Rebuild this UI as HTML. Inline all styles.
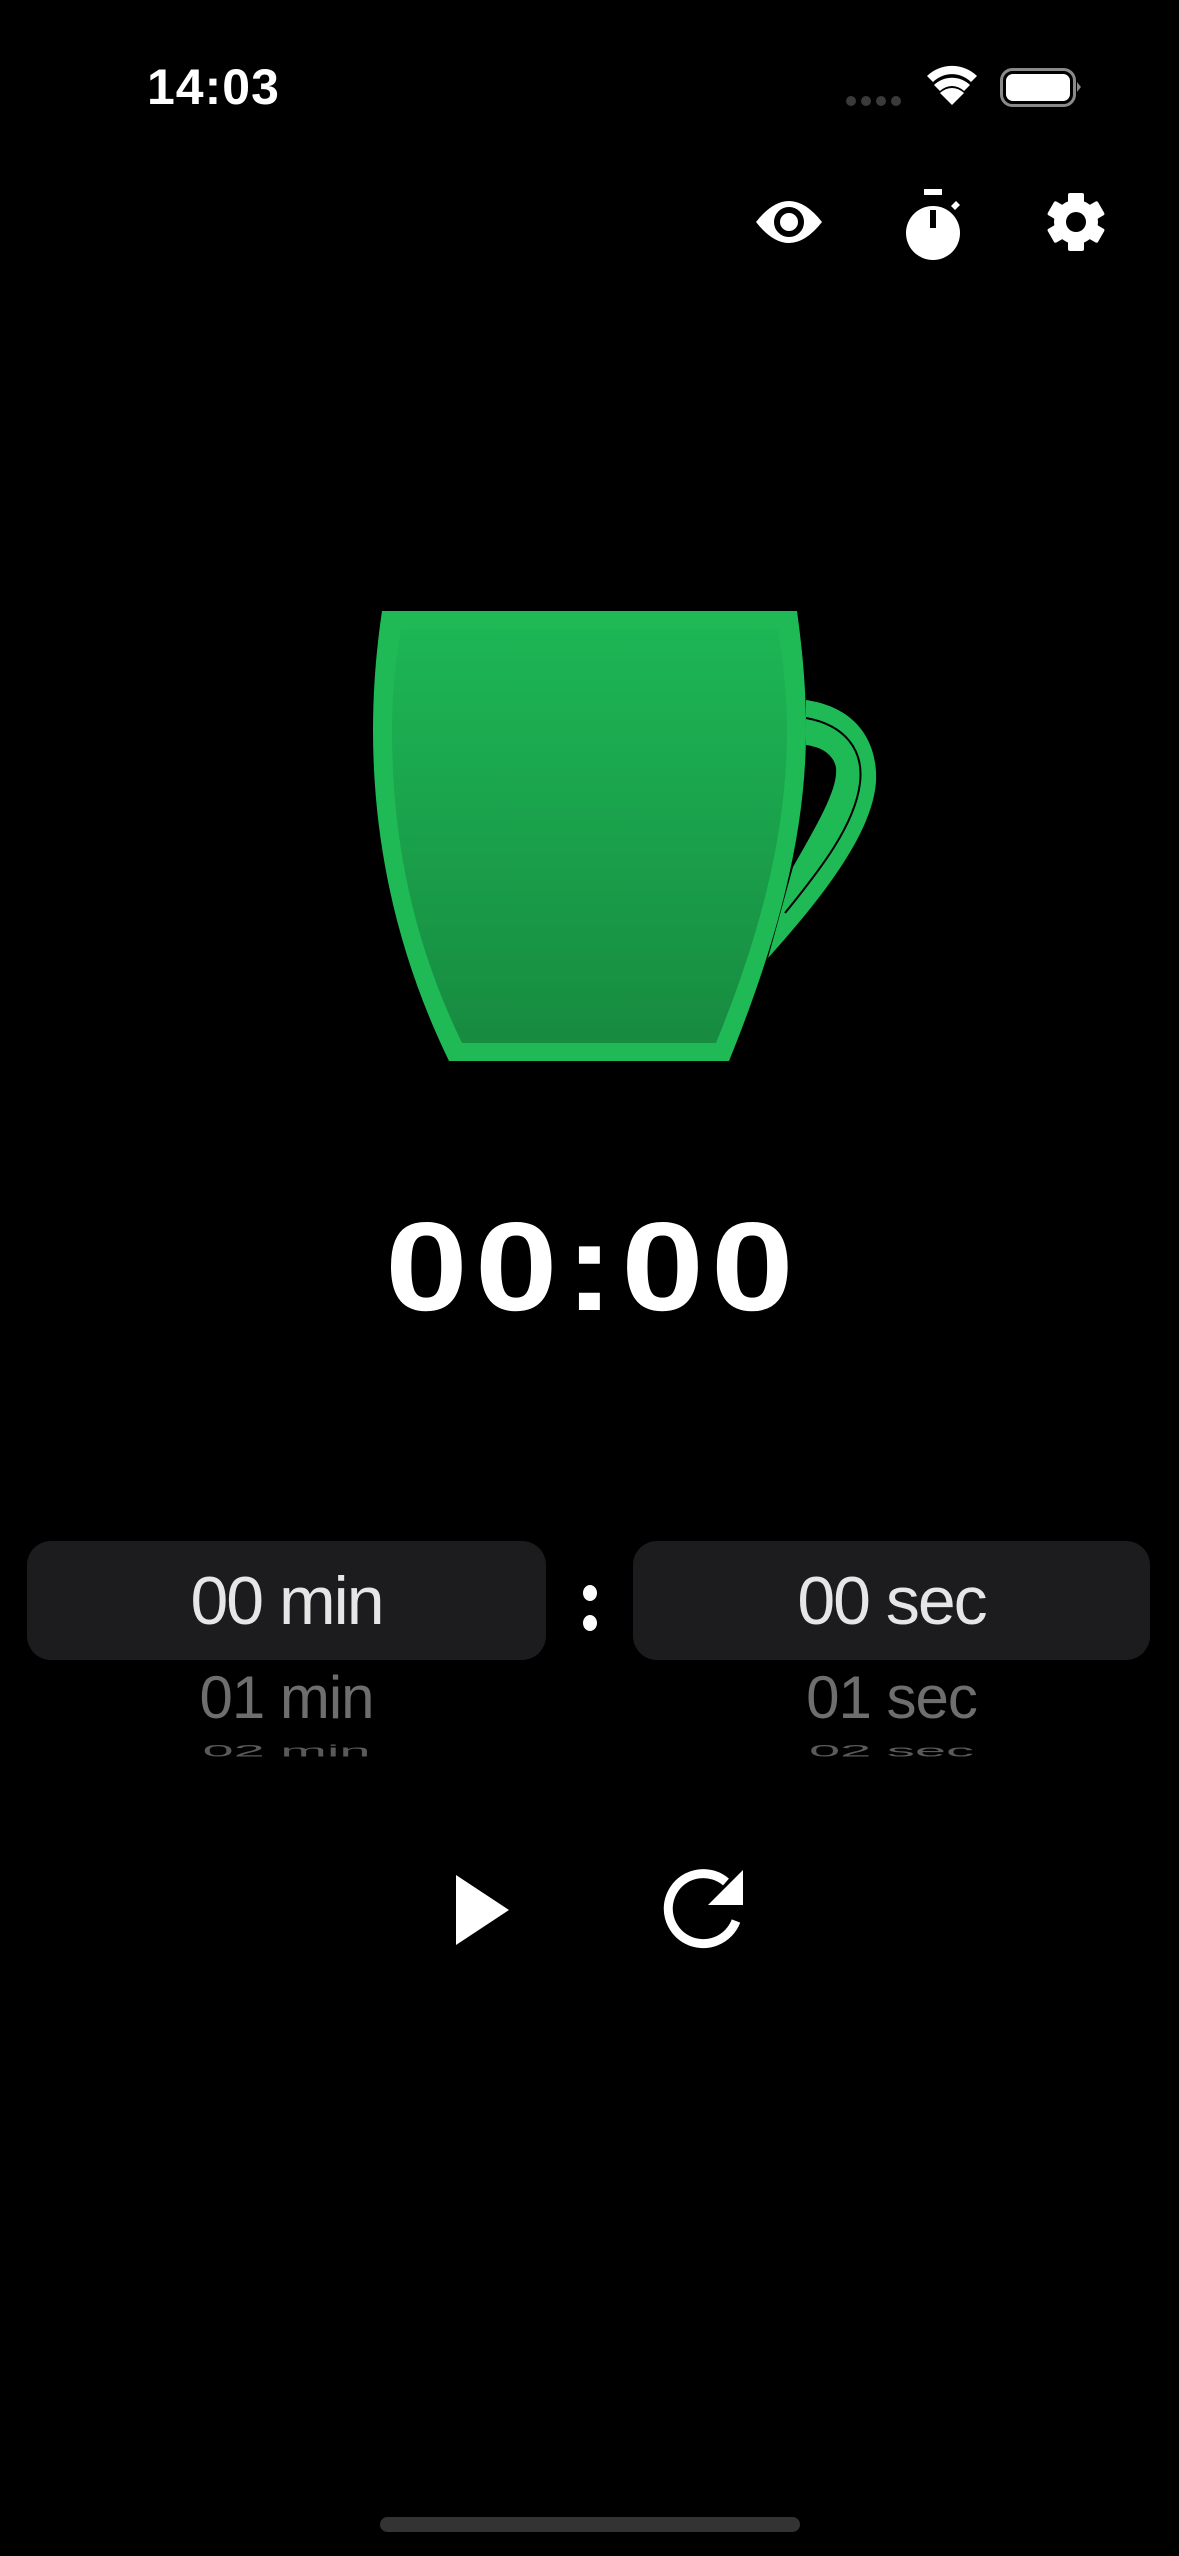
<!DOCTYPE html>
<html><head><meta charset="utf-8"><style>
html,body{margin:0;padding:0;background:#000;}
body{width:1179px;height:2556px;position:relative;overflow:hidden;font-family:"Liberation Sans",sans-serif;}
.t{position:absolute;color:#fff;white-space:nowrap;}
.box{position:absolute;top:1541px;height:119px;background:#1c1c1e;border-radius:24px;}
</style></head><body>
<svg width="1179" height="2556" style="position:absolute;left:0;top:0">
<defs><linearGradient id="g" x1="0" y1="0" x2="0" y2="1"><stop offset="0" stop-color="#1db655"/><stop offset="1" stop-color="#178b40"/></linearGradient></defs>
<g fill="#3a3a3a"><circle cx="851" cy="101" r="5"/><circle cx="866" cy="101" r="5"/><circle cx="881" cy="101" r="5"/><circle cx="896" cy="101" r="5"/></g>
<g fill="#fff"><path d="M952,105 L940,93 A17,17 0 0 1 964,93 Z"/><path d="M934,88 A26,26 0 0 1 970,88 L964,94 A17,17 0 0 0 940,94 Z" transform="translate(0,-3)"/><path d="M927,80 A36,36 0 0 1 977,80 L971,86 A27,27 0 0 0 933,86 Z" transform="translate(0,-4)"/></g>
<rect x="1001.5" y="69.5" width="73" height="36" rx="11" fill="none" stroke="#8a8a8a" stroke-width="3"/>
<rect x="1006" y="74" width="64" height="27" rx="7" fill="#fff"/>
<path d="M1077,82 L1081,87 L1077,92 Z" fill="#8a8a8a"/>
<path d="M756,222 Q789,180 822,222 Q789,264 756,222 Z" fill="#fff"/>
<circle cx="789" cy="222" r="12" fill="none" stroke="#000" stroke-width="6"/>
<circle cx="933" cy="233" r="27" fill="#fff"/>
<rect x="924" y="189" width="18" height="6" fill="#fff"/>
<path d="M951,206 L956,201 L960,205 L955,210 Z" fill="#fff"/>
<rect x="930" y="210" width="6" height="18" fill="#000"/>
<g transform="translate(1076,222)" fill="#fff">
<circle r="22"/>
<g id="tooth"><rect x="-8" y="-29" width="16" height="14" rx="2"/></g>
<use href="#tooth" transform="rotate(60)"/><use href="#tooth" transform="rotate(120)"/><use href="#tooth" transform="rotate(180)"/><use href="#tooth" transform="rotate(240)"/><use href="#tooth" transform="rotate(300)"/>
<circle r="10" fill="#000"/>
</g>
<path d="M806,700 C855,707 878,740 876,782 C872,835 820,900 768,958 L793,867 C820,820 838,788 836,768 C834,755 822,747 806,745 Z" fill="#1fba56"/>
<path d="M806,718 C845,725 864,750 860,783 C855,825 820,870 785,913" fill="none" stroke="#000" stroke-width="2"/>
<path d="M382,611 L797,611 C803,655 806,690 806,730 C806,830 780,935 729,1061 L449,1061 C400,960 373,850 373,730 C373,685 377,645 382,611 Z" fill="#1fba56"/>
<path d="M401,629 L778,629 C784,668 787,698 787,730 C787,830 762,930 716,1043 L462,1043 C417,950 392,850 392,730 C392,690 396,655 401,629 Z" fill="url(#g)"/>
<ellipse cx="590" cy="1593" rx="7" ry="8" fill="#fff"/><ellipse cx="590" cy="1623" rx="7" ry="8" fill="#fff"/>
<path d="M456,1875 L509,1910 L456,1945 Z" fill="#fff"/>
<path d="M736,1921 A35,35 0 1 1 726,1882" fill="none" stroke="#fff" stroke-width="9"/>
<path d="M743,1870 L743,1905 L708,1905 Z" fill="#fff"/>
<rect x="380" y="2517" width="420" height="15" rx="7.5" fill="#333"/>
</svg>
<div class="t" style="left:147px;top:58px;font-size:50px;font-weight:bold;letter-spacing:1px;">14:03</div>
<div class="t" style="left:0;width:1179px;text-align:center;top:1194px;font-size:126px;font-weight:bold;letter-spacing:6px;text-indent:6px;transform:scaleX(1.18);transform-origin:590px 0;">00:00</div>
<div class="box" style="left:27px;width:519px;"></div>
<div class="box" style="left:633px;width:517px;"></div>
<div class="t" style="left:27px;width:519px;text-align:center;top:1562px;font-size:68px;color:#e6e6e6;letter-spacing:-2px;">00 min</div>
<div class="t" style="left:633px;width:517px;text-align:center;top:1562px;font-size:68px;color:#e6e6e6;letter-spacing:-2px;">00 sec</div>
<div class="t" style="left:27px;width:519px;text-align:center;top:1663px;font-size:60px;color:#6e6e6e;letter-spacing:-1px;">01 min</div>
<div class="t" style="left:633px;width:517px;text-align:center;top:1663px;font-size:60px;color:#6e6e6e;letter-spacing:-1px;">01 sec</div>
<div class="t" style="left:27px;width:519px;text-align:center;top:1741px;font-size:56px;color:#5a5a5a;transform:scaleY(0.3);transform-origin:center top;">02 min</div>
<div class="t" style="left:633px;width:517px;text-align:center;top:1741px;font-size:56px;color:#5a5a5a;transform:scaleY(0.3);transform-origin:center top;">02 sec</div>
</body></html>
